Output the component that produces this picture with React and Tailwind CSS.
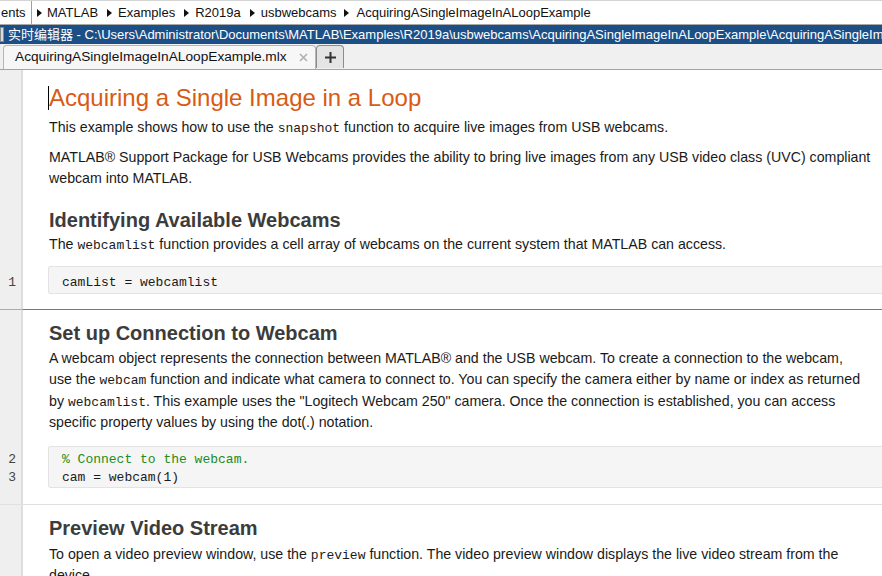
import React from "react";

const Arrow = () => (
  <svg width="5" height="8" viewBox="0 0 5 8" className="shrink-0">
    <path d="M0 0 L5 4 L0 8 Z" fill="#111" />
  </svg>
);

const Row = ({ num, pad, children }) => (
  <div className="flex">
    <div className="w-[23px] shrink-0 bg-[#efefef] border-r-2 border-[#dedede] text-right pr-[5px] font-['Liberation_Mono','DejaVu_Sans_Mono',monospace] text-[13px] leading-[18px] text-[#444]">
      {num}
    </div>
    <div className={"flex-1 min-w-0 pl-[26px] " + pad}>{children}</div>
  </div>
);

const C = ({ children }) => (
  <span className="font-['Liberation_Mono','DejaVu_Sans_Mono',monospace] text-[13px] leading-none">{children}</span>
);

export default function App() {
  return (
    <div className="w-[882px] h-[576px] overflow-hidden bg-white font-['Liberation_Sans',Arial,sans-serif] text-[#1a1a1a]">
      {/* breadcrumb */}
      <div className="h-[25px] border-t border-[#d4d4d4] border-b border-b-[#a8a8a8] flex items-center text-[13px] whitespace-nowrap text-[#111]">
        <span className="pl-[1px] w-[32px] h-full flex items-center border-r border-[#a0a0a0]">ents</span>
        <span className="ml-[5px]"><Arrow /></span>
        <span className="ml-[5px]">MATLAB</span>
        <span className="ml-[9px]"><Arrow /></span>
        <span className="ml-[6px]">Examples</span>
        <span className="ml-[9px]"><Arrow /></span>
        <span className="ml-[6px]">R2019a</span>
        <span className="ml-[9px]"><Arrow /></span>
        <span className="ml-[6px]">usbwebcams</span>
        <span className="ml-[7px]"><Arrow /></span>
        <span className="ml-[8px]">AcquiringASingleImageInALoopExample</span>
      </div>
      {/* title bar */}
      <div className="h-[19px] bg-[#1d4f87] flex items-center whitespace-nowrap overflow-hidden text-white text-[13px] font-['Liberation_Sans','Noto_Sans_CJK_SC',sans-serif]">
        <div className="w-[4px] h-[15px] bg-[#dcdcdc] border border-[#8a8a8a] shrink-0"></div>
        <span className="ml-[4px]">实时编辑器 - C:\Users\Administrator\Documents\MATLAB\Examples\R2019a\usbwebcams\AcquiringASingleImageInALoopExample\AcquiringASingleImageInALoopExample.mlx</span>
      </div>
      {/* tab bar */}
      <div className="h-[26px] bg-[#f0f0f0] border-b border-[#a3a3a3] flex items-end pl-[3px]">
        <div className="w-[313px] h-[24px] bg-[#f7f7f7] border border-b-0 border-[#b5b5b5] rounded-t-[4px] flex items-center pl-[11px] text-[13.7px] text-[#111] whitespace-nowrap">
          <span>AcquiringASingleImageInALoopExample.mlx</span>
          <svg width="9" height="9" viewBox="0 0 9 9" className="ml-[12px]">
            <path d="M1 1 L8 8 M8 1 L1 8" stroke="#b0b0b0" strokeWidth="1.6" />
          </svg>
        </div>
        <div className="w-[28px] h-[23px] mb-[1px] bg-[#e4e4e4] border border-b-0 border-[#8c8c8c] rounded-t-[4px] flex items-center justify-center">
          <svg width="11" height="11" viewBox="0 0 11 11">
            <path d="M5.5 0 V11 M0 5.5 H11" stroke="#333" strokeWidth="2" />
          </svg>
        </div>
      </div>

      {/* section 1 */}
      <Row pad="pt-[14px] pr-[8px]">
        <div className="relative text-[24px] leading-[28px] text-[#d95a12]">
          <span className="absolute left-[-1px] top-[2px] w-px h-[24px] bg-black"></span>
          Acquiring a Single Image in a Loop
        </div>
      </Row>
      <Row pad="pt-[5px] pr-[8px]">
        <p className="text-[14.2px] leading-[21px]">
          This example shows how to use the <C>snapshot</C> function to acquire live images from USB webcams.
        </p>
      </Row>
      <Row pad="pt-[9px] pr-[8px]">
        <p className="text-[14.2px] leading-[21px]">
          MATLAB® Support Package for USB Webcams provides the ability to bring live images from any USB video class (UVC) compliant webcam into MATLAB.
        </p>
      </Row>
      <Row pad="pt-[19px] pr-[8px]">
        <h2 className="text-[20px] leading-[24px] font-bold text-[#3c3c3c]">Identifying Available Webcams</h2>
      </Row>
      <Row pad="pt-[2px] pr-[8px]">
        <p className="text-[14.2px] leading-[21px]">
          The <C>webcamlist</C> function provides a cell array of webcams on the current system that MATLAB can access.
        </p>
      </Row>
      <Row pad="h-[11px]"></Row>
      <div className="flex">
        <div className="w-[23px] shrink-0 bg-[#efefef] border-r-2 border-[#dedede] text-right pr-[5px] pt-[8px] font-['Liberation_Mono','DejaVu_Sans_Mono',monospace] text-[13px] leading-[18px] text-[#444]">
          1
        </div>
        <div className="flex-1 min-w-0 pl-[25px]">
          <div className="bg-[#f5f5f5] border border-[#e3e3e3] border-r-0 rounded-l-[3px] pl-[13px] pt-[7px] pb-[1px] font-['Liberation_Mono','DejaVu_Sans_Mono',monospace] text-[13px] leading-[18px] text-[#1a1a1a]">
            camList = webcamlist
          </div>
        </div>
      </div>
      <Row pad="h-[15px]"></Row>

      {/* blue separator */}
      <div className="flex h-px">
        <div className="w-[23px] bg-[#6fbcf5]"></div>
        <div className="flex-1 bg-[#1a8fe6]"></div>
      </div>

      {/* section 2 */}
      <Row pad="pt-[11px] pr-[8px]">
        <h2 className="text-[20px] leading-[24px] font-bold text-[#3c3c3c]">Set up Connection to Webcam</h2>
      </Row>
      <Row pad="pt-[3px] pr-[14px]">
        <p className="text-[14.2px] leading-[21.3px]">
          A webcam object represents the connection between MATLAB® and the USB webcam. To create a connection to the webcam, use the <C>webcam</C> function and indicate what camera to connect to. You can specify the camera either by name or index as returned by <C>webcamlist</C>. This example uses the "Logitech Webcam 250" camera. Once the connection is established, you can access specific property values by using the dot(.) notation.
        </p>
      </Row>
      <Row pad="h-[13px]"></Row>
      <div className="flex">
        <div className="w-[23px] shrink-0 bg-[#efefef] border-r-2 border-[#dedede] text-right pr-[5px] pt-[5px] font-['Liberation_Mono','DejaVu_Sans_Mono',monospace] text-[13px] leading-[18px] text-[#444]">
          <div>2</div>
          <div>3</div>
        </div>
        <div className="flex-1 min-w-0 pl-[25px]">
          <div className="bg-[#f5f5f5] border border-[#e3e3e3] border-r-0 rounded-l-[3px] pl-[13px] pt-[4px] pb-0 font-['Liberation_Mono','DejaVu_Sans_Mono',monospace] text-[13px] leading-[18px] text-[#1a1a1a]">
            <div className="text-[#228b22]">% Connect to the webcam.</div>
            <div>cam = webcam(1)</div>
          </div>
        </div>
      </div>
      <Row pad="h-[16px]"></Row>

      {/* gray separator */}
      <div className="h-px bg-[#e0e0e0]"></div>

      {/* section 3 */}
      <Row pad="pt-[11px] pr-[8px]">
        <h2 className="text-[20px] leading-[24px] font-bold text-[#3c3c3c]">Preview Video Stream</h2>
      </Row>
      <Row pad="pt-[4px] pr-[8px]">
        <p className="text-[14.2px] leading-[21px]">
          To open a video preview window, use the <C>preview</C> function. The video preview window displays the live video stream from the device.
        </p>
      </Row>
      <Row pad="h-[40px]"></Row>
    </div>
  );
}
